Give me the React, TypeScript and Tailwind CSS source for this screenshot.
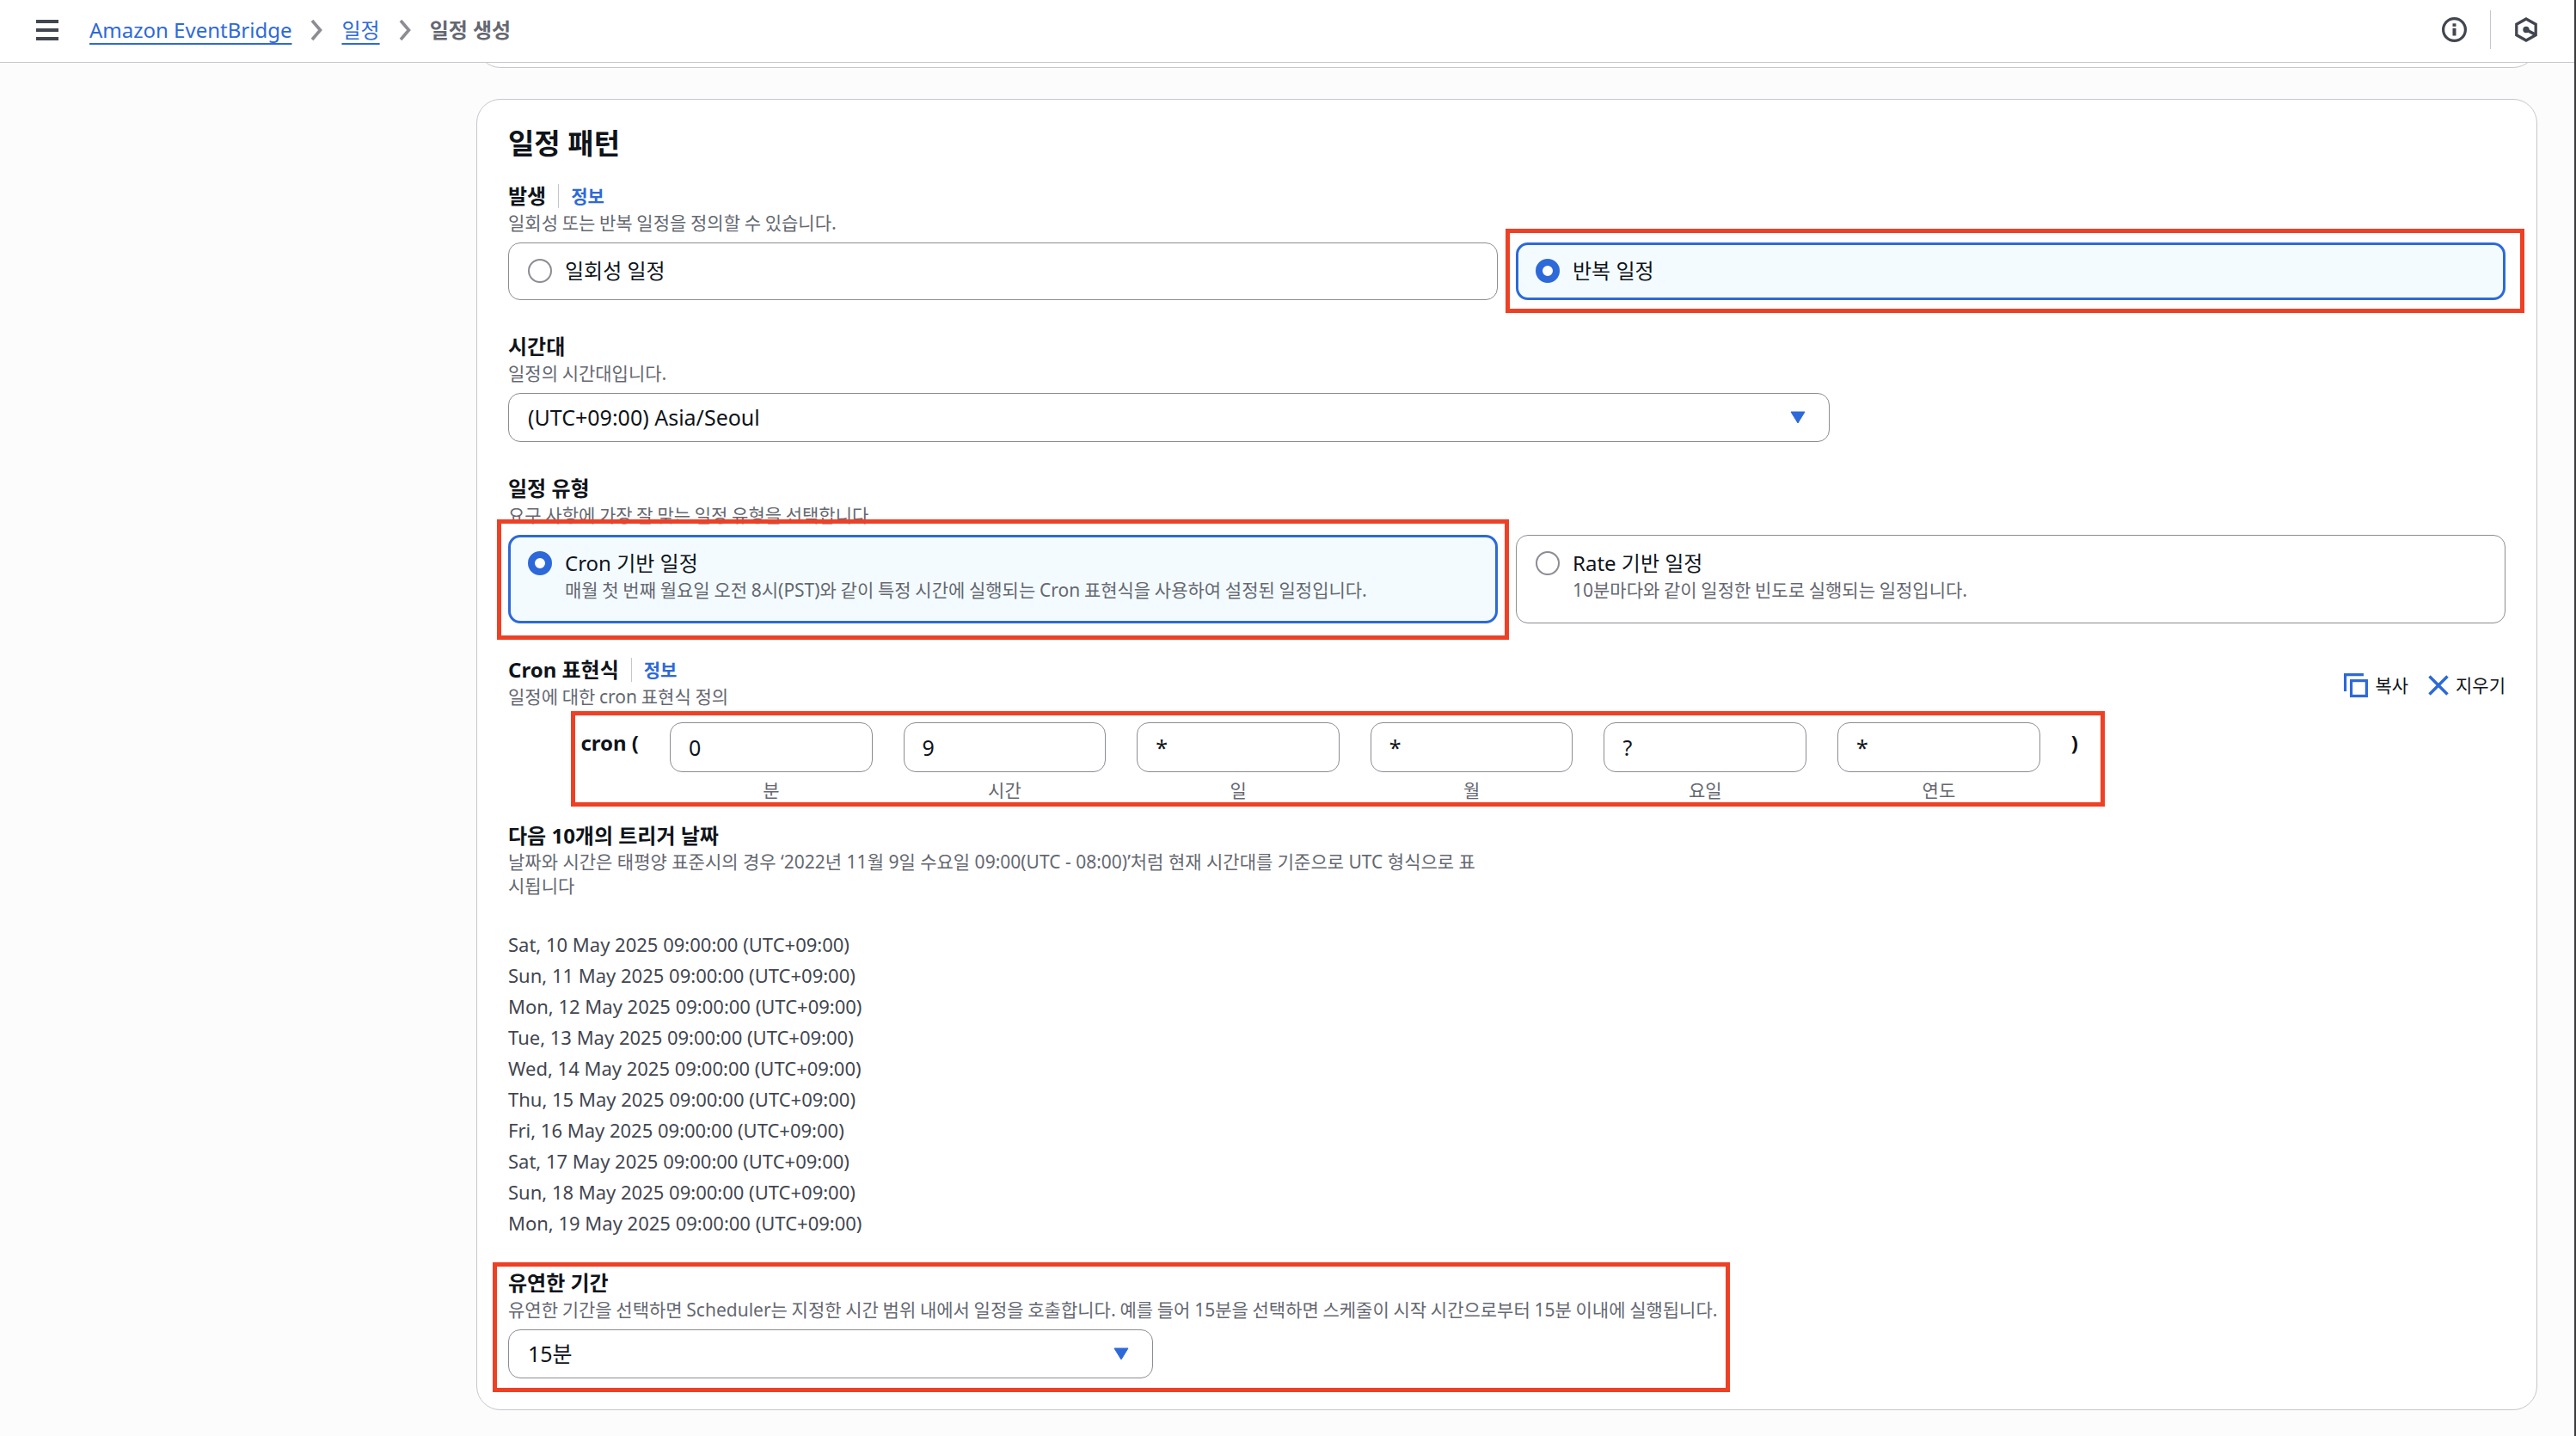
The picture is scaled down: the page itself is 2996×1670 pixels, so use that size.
import { useId, useState, type ReactNode } from "react";

function Highlight({ className }: { className: string }) {
  return (
    <span aria-hidden="true" className={`pointer-events-none absolute border-[5px] border-[#ee4025] ${className}`} />
  );
}

/* Sets the Latin words and digits of a Korean sentence in Noto Sans. */
function Mixed({ text }: { text: string }) {
  return (
    <>
      {text.split(/([A-Za-z0-9:()]+)/).map((run, i) =>
        i % 2 === 1 ? (
          <span key={i} className="font-['Noto_Sans',sans-serif] leading-none">
            {run}
          </span>
        ) : (
          run
        ),
      )}
    </>
  );
}

function Chevron() {
  return (
    <svg className="h-7 w-4" viewBox="0 0 16 28" fill="none" stroke="#8c8c94" strokeWidth="3.6" aria-hidden="true">
      <path d="M3 3 L12.5 14 L3 25" />
    </svg>
  );
}

function TopBar() {
  return (
    <header className="flex h-[73px] items-center justify-between border-b border-[#c6c6cd] bg-white pr-[42px] pb-[3px] pl-[42px]">
      <div className="flex items-center">
        <button type="button" aria-label="메뉴" className="mr-9">
          <svg className="block h-6 w-[26px]" viewBox="0 0 26 24" fill="#424650" aria-hidden="true">
            <rect x="0" y="0" width="26" height="4" />
            <rect x="0" y="10" width="26" height="4" />
            <rect x="0" y="20" width="26" height="4" />
          </svg>
        </button>
        <nav aria-label="이동 경로" className="flex items-center gap-[21px] text-[24px] leading-[35px]">
          <a href="#eventbridge" className="text-[#2d69d9] underline decoration-2 underline-offset-[6px]">
            Amazon EventBridge
          </a>
          <Chevron />
          <a href="#schedules" className="text-[#2d69d9] underline decoration-2 underline-offset-[6px]">
            일정
          </a>
          <Chevron />
          <span className="font-bold text-[#656871]">일정 생성</span>
        </nav>
      </div>
      <div className="flex items-center gap-[27px]">
        <button type="button" aria-label="정보 패널">
          <svg className="block size-[29px]" viewBox="0 0 29 29" fill="none" aria-hidden="true">
            <circle cx="14.5" cy="14.5" r="12.9" stroke="#424650" strokeWidth="3.2" />
            <rect x="12.5" y="7.3" width="4" height="3.5" fill="#424650" />
            <rect x="12.5" y="12.8" width="4" height="8.7" fill="#424650" />
          </svg>
        </button>
        <span className="h-[45px] w-px bg-[#c6c6cd]" />
        <button type="button" aria-label="Amazon Q">
          <svg className="block h-[29px] w-7" viewBox="0 0 28 29" fill="none" stroke="#424650" aria-hidden="true">
            <path d="M14 2 L25.2 8.2 V20.8 L14 27 L2.8 20.8 V8.2 Z" strokeWidth="3.3" />
            <circle cx="14" cy="14.5" r="3.7" fill="#424650" stroke="none" />
            <path d="M14 14.5 L25 20.3" strokeWidth="3.6" />
          </svg>
        </button>
      </div>
    </header>
  );
}

function FieldHeading({
  htmlFor,
  title,
  hint,
  info,
  multiline,
}: {
  htmlFor?: string;
  title: string;
  hint: string;
  info?: boolean;
  multiline?: boolean;
}) {
  return (
    <div>
      <div className="flex h-[33px] items-center">
        {htmlFor ? (
          <label htmlFor={htmlFor} className="text-[24px] leading-[33px] font-bold">
            {title}
          </label>
        ) : (
          <h3 className="text-[24px] leading-[33px] font-bold">{title}</h3>
        )}
        {info && (
          <a
            href="#info"
            className="ml-3.5 border-l border-[#c6c6cd] pl-3.5 text-[21px] leading-7 font-bold text-[#2d69d9]"
          >
            정보
          </a>
        )}
      </div>
      {multiline ? (
        <p className="text-[21px] leading-7 text-[#656871]">{hint}</p>
      ) : (
        <p className="font-['Noto_Sans_CJK_KR',sans-serif] text-[21px] leading-7 text-[#656871]">
          <Mixed text={hint} />
        </p>
      )}
    </div>
  );
}

function Tile({
  name,
  title,
  hint,
  checked,
  onSelect,
  children,
}: {
  name: string;
  title: string;
  hint?: string;
  checked: boolean;
  onSelect: () => void;
  children?: ReactNode;
}) {
  const base = "flex h-full items-start gap-[15px] rounded-[14px]";
  const tone = checked
    ? "border-[3px] border-[#2d69d9] bg-[#f3fbfe] px-[20px] pt-[13px] pb-[15px]"
    : "border border-[#8c8c94] bg-white px-[22px] pt-[15px] pb-[17px]";
  return (
    <div className="relative">
      <label className={`${base} ${tone}`}>
        <input
          type="radio"
          name={name}
          checked={checked}
          onChange={onSelect}
          className="mt-[3px] size-7 shrink-0 appearance-none rounded-full border-2 border-[#8c8c94] bg-white checked:border-8 checked:border-[#2d69d9]"
        />
        <span className="block">
          <span className="block text-[24px] leading-[33px]">{title}</span>
          {hint && (
            <span className="block pb-2 font-['Noto_Sans_CJK_KR',sans-serif] text-[21px] leading-7 text-[#656871]">
              <Mixed text={hint} />
            </span>
          )}
        </span>
      </label>
      {children}
    </div>
  );
}

function Dropdown({ id, options }: { id: string; options: string[] }) {
  return (
    <div className="relative">
      <select
        id={id}
        className="block h-[57px] w-full appearance-none rounded-[14px] border border-[#8c8c94] bg-white px-[22px] text-[25px] leading-[35px]"
      >
        {options.map((o) => (
          <option key={o}>{o}</option>
        ))}
      </select>
      <svg
        className="pointer-events-none absolute top-[21px] right-7 h-[15px] w-[18px]"
        viewBox="0 0 18 15"
        fill="#2d69d9"
        stroke="#2d69d9"
        strokeLinejoin="round"
        aria-hidden="true"
      >
        <path d="M1 1 H17 L9 14 Z" />
      </svg>
    </div>
  );
}

const cronParts = [
  { label: "분", value: "0" },
  { label: "시간", value: "9" },
  { label: "일", value: "*" },
  { label: "월", value: "*" },
  { label: "요일", value: "?" },
  { label: "연도", value: "*" },
];

function CronRow() {
  const base = useId();
  return (
    <div className="relative mt-[17px]">
      <div className="grid grid-cols-[152px_repeat(6,471fr)_1010fr] gap-9">
        <span className="pt-1.5 text-right text-[24px] leading-[35px] font-bold">cron (</span>
        {cronParts.map((p) => (
          <div key={p.label} className="flex min-w-0 flex-col gap-[7px]">
            <input
              id={`${base}-${p.label}`}
              type="text"
              defaultValue={p.value}
              className="h-[58px] w-full rounded-[14px] border border-[#8c8c94] bg-white px-[21px] text-[25px] leading-[35px]"
            />
            <label htmlFor={`${base}-${p.label}`} className="text-center text-[21px] leading-7 text-[#656871]">
              {p.label}
            </label>
          </div>
        ))}
        <span className="pt-1.5 text-[24px] leading-[35px] font-bold">)</span>
      </div>
      <div className="pointer-events-none absolute inset-0 grid grid-cols-[152px_repeat(6,471fr)_1010fr] gap-9">
        <div className="relative col-span-7">
          <Highlight className="-top-[13px] -right-[75px] -bottom-[5px] left-[73px]" />
        </div>
      </div>
    </div>
  );
}

const triggerDates = [
  "Sat, 10 May 2025 09:00:00 (UTC+09:00)",
  "Sun, 11 May 2025 09:00:00 (UTC+09:00)",
  "Mon, 12 May 2025 09:00:00 (UTC+09:00)",
  "Tue, 13 May 2025 09:00:00 (UTC+09:00)",
  "Wed, 14 May 2025 09:00:00 (UTC+09:00)",
  "Thu, 15 May 2025 09:00:00 (UTC+09:00)",
  "Fri, 16 May 2025 09:00:00 (UTC+09:00)",
  "Sat, 17 May 2025 09:00:00 (UTC+09:00)",
  "Sun, 18 May 2025 09:00:00 (UTC+09:00)",
  "Mon, 19 May 2025 09:00:00 (UTC+09:00)",
];

export default function App() {
  const [occurrence, setOccurrence] = useState("recurring");
  const [kind, setKind] = useState("cron");
  return (
    <div className="min-h-screen border-r-2 border-[#3c3c3e] bg-[#fcfcfd] font-['Noto_Sans','Noto_Sans_CJK_KR',sans-serif] text-[#0f141a]">
      <TopBar />
      <main className="overflow-hidden pr-[43px] pb-[30px] pl-[554px]">
        <div className="-mt-[60px] h-[66px] rounded-[28px] border border-[#c6c6cd] bg-white" />
        <section className="mt-9 rounded-[28px] border border-[#c6c6cd] bg-white px-9 pt-[30px] pb-9">
          <h2 className="text-[33px] leading-[42px] font-bold">일정 패턴</h2>

          <div className="mt-[23px]">
            <FieldHeading title="발생" hint="일회성 또는 반복 일정을 정의할 수 있습니다." info />
            <div className="mt-2.5 grid grid-cols-2 gap-[21px]">
              <Tile
                name="occurrence"
                title="일회성 일정"
                checked={occurrence === "once"}
                onSelect={() => setOccurrence("once")}
              />
              <Tile
                name="occurrence"
                title="반복 일정"
                checked={occurrence === "recurring"}
                onSelect={() => setOccurrence("recurring")}
              >
                <Highlight className="-top-4 -right-[22px] -bottom-[15px] -left-3" />
              </Tile>
            </div>
          </div>

          <div className="mt-[37px]">
            <FieldHeading htmlFor="timezone" title="시간대" hint="일정의 시간대입니다." />
            <div className="mt-2.5 grid grid-cols-3 gap-9">
              <div className="col-span-2">
                <Dropdown id="timezone" options={["(UTC+09:00) Asia/Seoul"]} />
              </div>
            </div>
          </div>

          <div className="mt-[37px]">
            <FieldHeading title="일정 유형" hint="요구 사항에 가장 잘 맞는 일정 유형을 선택합니다." />
            <div className="mt-2.5 grid grid-cols-2 gap-[21px]">
              <Tile
                name="kind"
                title="Cron 기반 일정"
                hint="매월 첫 번째 월요일 오전 8시(PST)와 같이 특정 시간에 실행되는 Cron 표현식을 사용하여 설정된 일정입니다."
                checked={kind === "cron"}
                onSelect={() => setKind("cron")}
              >
                <Highlight className="-top-[18px] -right-[13px] -bottom-[19px] -left-[13px]" />
              </Tile>
              <Tile
                name="kind"
                title="Rate 기반 일정"
                hint="10분마다와 같이 일정한 빈도로 실행되는 일정입니다."
                checked={kind === "rate"}
                onSelect={() => setKind("rate")}
              />
            </div>
          </div>

          <div className="mt-[37px]">
            <div className="flex items-center justify-between">
              <FieldHeading title="Cron 표현식" hint="일정에 대한 cron 표현식 정의" info />
              <div className="flex items-center gap-[23px] pt-2 text-[21px] leading-7">
                <button type="button" className="flex items-center gap-2">
                  <svg className="size-7" viewBox="0 0 28 28" fill="none" stroke="#2d69d9" strokeWidth="3.2" aria-hidden="true">
                    <path d="M23 1.6 H1.6 V21" />
                    <rect x="8.6" y="8.6" width="17.8" height="17.8" />
                  </svg>
                  복사
                </button>
                <button type="button" className="flex items-center gap-2">
                  <svg className="size-6" viewBox="0 0 24 24" fill="none" stroke="#2d69d9" strokeWidth="3.5" aria-hidden="true">
                    <path d="M1.5 1.5 L22.5 22.5 M22.5 1.5 L1.5 22.5" />
                  </svg>
                  지우기
                </button>
              </div>
            </div>
            <CronRow />
          </div>

          <div className="mt-[22px]">
            <div className="w-1/2 pr-[27px]">
              <FieldHeading
                multiline
                title="다음 10개의 트리거 날짜"
                hint="날짜와 시간은 태평양 표준시의 경우 ‘2022년 11월 9일 수요일 09:00(UTC - 08:00)’처럼 현재 시간대를 기준으로 UTC 형식으로 표시됩니다"
              />
            </div>
            <ul className="mt-9 text-[22px] leading-9 text-[#424650]">
              {triggerDates.map((d) => (
                <li key={d}>{d}</li>
              ))}
            </ul>
          </div>

          <div className="relative mt-[35px]">
            <FieldHeading
              htmlFor="window"
              title="유연한 기간"
              hint="유연한 기간을 선택하면 Scheduler는 지정한 시간 범위 내에서 일정을 호출합니다. 예를 들어 15분을 선택하면 스케줄이 시작 시간으로부터 15분 이내에 실행됩니다."
            />
            <div className="mt-2.5 grid grid-cols-3 gap-9">
              <Dropdown id="window" options={["15분"]} />
            </div>
            <Highlight className="-top-[7px] -bottom-4 -left-[18px] w-[1439px]" />
          </div>
        </section>
      </main>
    </div>
  );
}
